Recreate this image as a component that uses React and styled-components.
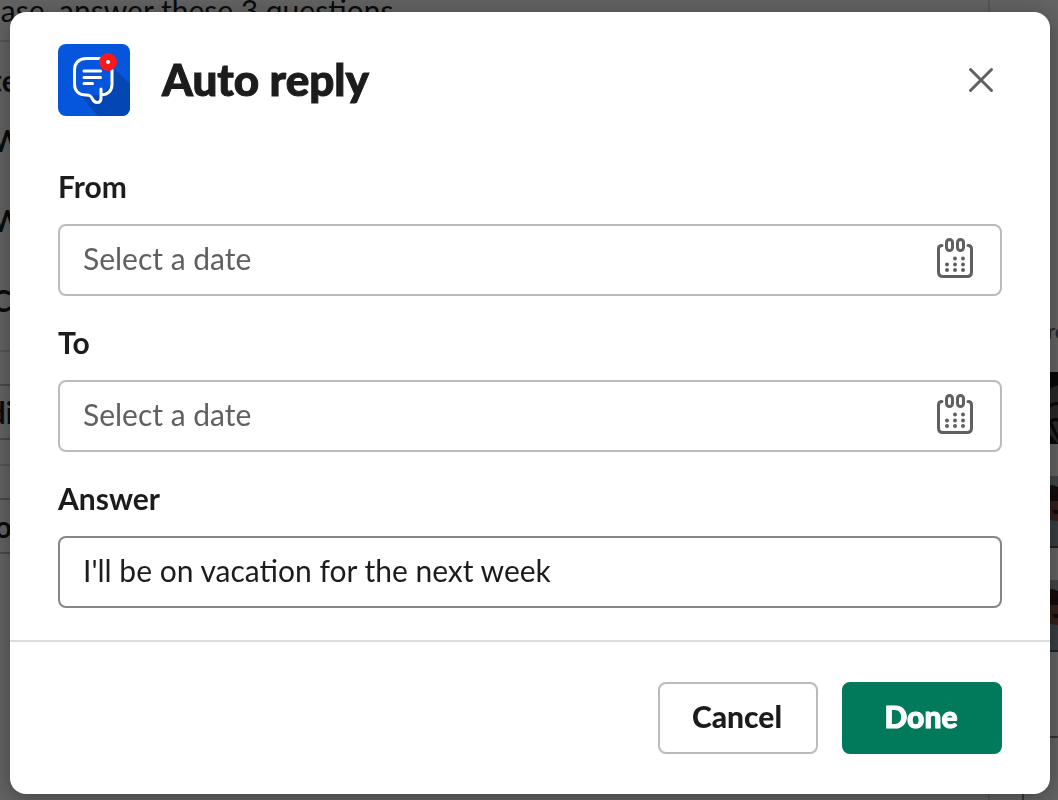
// External
import React, { useState } from 'react';
import styled, { createGlobalStyle } from 'styled-components';

const GlobalStyle = createGlobalStyle`
    * {
        box-sizing: border-box;
    }

    body {
        margin: 0;
        background-color: white;
        color: #1d1c1d;
        font-family: Lato, sans-serif;
        font-size: 30px;
        line-height: 36px;
    }

    input, button {
        font: inherit;
        color: inherit;
    }
`;

// Conversation behind the dialog
const Page = styled.div`
    display: flex;
    height: 100vh;
    overflow: hidden;
`;

const Thread = styled.main`
    flex: 1;
    margin-left: -40px;
    border-right: 2px solid #ddd;
`;

const Intro = styled.p`
    margin: 0;
    height: 42px;
    line-height: 20px;
    border-bottom: 2px solid #ddd;
`;

const ReportTitle = styled.h2`
    margin: 0;
    padding: 20px 0;
    font-size: 30px;
    line-height: 36px;
`;

const Questions = styled.ol`
    display: flex;
    flex-direction: column;
    gap: 44px;
    margin: 0;
    padding: 4px 0 32px;
    font-weight: 700;
    list-style: none;
`;

const Actions = styled.div`
    padding: 32px 0 24px;
    border-top: 2px solid #ddd;
`;

const ActionButton = styled.button`
    display: block;
    width: 160px;
    height: 56px;
    padding: 0 10px;
    border: 2px solid #bbb;
    border-radius: 8px;
    background-color: white;
    font-weight: 700;
    text-align: left;
`;

const Sidebar = styled.aside`
    width: 68px;
    padding: 310px 0 0 24px;
    overflow: hidden;
`;

const Note = styled.p`
    margin: 0 0 20px;
    color: #616061;
    font-size: 22px;
    line-height: 42px;
`;

const Photo = styled.svg`
    display: block;
    width: 72px;
    height: 72px;
    margin-bottom: 32px;
`;

const Composer = styled.div`
    height: 120px;
    margin: 84px 0 0 8px;
    border-top: 2px solid #888;
    border-left: 2px solid #888;
`;

// Dialog
const Overlay = styled.div`
    position: fixed;
    inset: 0;
    padding: 12px 8px 6px 10px;
    background-color: rgba(0, 0, 0, 0.61);
    overflow: auto;
`;

const Modal = styled.section`
    background-color: white;
    border-radius: 16px;
    box-shadow: 0 4px 24px rgba(0, 0, 0, 0.35);
`;

const Header = styled.header`
    display: flex;
    align-items: center;
    gap: 32px;
    padding: 32px 48px 0;
`;

const Title = styled.h1`
    flex: 1;
    margin: 0;
    padding-bottom: 2px;
    font-size: 44px;
    font-weight: 900;
    line-height: 56px;
    -webkit-text-stroke: 1px currentColor;
`;

const CloseButton = styled.button`
    display: flex;
    align-items: center;
    justify-content: center;
    width: 42px;
    height: 42px;
    padding: 0;
    border: 0;
    background: none;
    color: #616061;
`;

const Form = styled.div`
    display: flex;
    flex-direction: column;
    gap: 28px;
    padding: 52px 48px 32px;
`;

const Field = styled.div`
    display: flex;
    flex-direction: column;
    gap: 20px;
`;

const Label = styled.label`
    font-weight: 700;
`;

const InputBox = styled.div`
    display: flex;
    align-items: center;
    height: 72px;
    padding: 0 27px 4px 23px;
    border: 2px solid ${ ( { $filled } ) => $filled ? '#868686' : '#bbb' };
    border-radius: 8px;
`;

const Input = styled.input`
    flex: 1;
    min-width: 0;
    height: 40px;
    padding: 0;
    border: 0;
    outline: 0;
    background: none;

    &::placeholder {
        color: #616061;
        opacity: 1;
    }
`;

const CalendarButton = styled.button`
    display: flex;
    padding: 0;
    border: 0;
    background: none;
    color: #616061;
`;

const Footer = styled.footer`
    display: flex;
    justify-content: flex-end;
    gap: 24px;
    padding: 40px 48px;
    border-top: 2px solid #ddd;
`;

const Button = styled.button`
    width: 160px;
    height: 72px;
    padding: 0 2px 4px 0;
    border: 2px solid ${ ( { $primary } ) => $primary ? '#007a5a' : '#bbb' };
    border-radius: 8px;
    background-color: ${ ( { $primary } ) => $primary ? '#007a5a' : 'white' };
    color: ${ ( { $primary } ) => $primary ? 'white' : '#1d1c1d' };
    font-weight: 900;
    -webkit-text-stroke: ${ ( { $primary } ) => $primary ? '1px' : '0' } currentColor;
`;

const Logo = () =>
    <svg width="72" height="72" viewBox="0 0 72 72" fill="none" aria-hidden="true">
        <clipPath id="logo-shape">
            <rect width="72" height="72" rx="8" />
        </clipPath>
        <g clipPath="url(#logo-shape)">
            <rect width="72" height="72" fill="#0556dc" />
            <path d="M56 24L72 40V72H40L22 51H43L54 40Z" fill="#0446b4" />
        </g>
        <g stroke="white" strokeWidth="3" strokeLinecap="round" strokeLinejoin="round">
            <path d="M44 14.5H28C21 14.5 16.5 19 16.5 26V40C16.5 47 21 51 28 51C32 51 33 52 34.5 55C36 58 37.5 58.5 39 58.5C41.5 58.5 43 57 43 54V45M43 51C50 50.5 54 46.5 54 40V26" />
            <path d="M26 27H42.500M26 33.500H42.500M26 39.500H34.500" />
        </g>
        <circle cx="50" cy="18" r="9" fill="#f8191c" />
        <circle cx="50" cy="18" r="2" fill="white" />
    </svg>;

const CloseIcon = () =>
    <svg width="26" height="26" viewBox="0 0 26 26" stroke="currentColor" strokeWidth="3" strokeLinecap="round" aria-hidden="true">
        <path d="M2.500 2.500L23.500 23.500M23.500 2.500L2.500 23.500" />
    </svg>;

const CalendarIcon = () =>
    <svg width="36" height="40" viewBox="0 0 36 40" fill="none" stroke="currentColor" strokeWidth="3" strokeLinecap="round" aria-hidden="true">
        <path d="M5 7.500C2.500 7.500 1.500 9 1.500 11V34C1.500 37 3 38.500 6 38.500H30C33 38.500 34.500 37 34.500 34V11C34.500 9 33.500 7.500 31 7.500" />
        <rect x="9.500" y="1.500" width="6" height="11" rx="3" />
        <rect x="20.500" y="1.500" width="6" height="11" rx="3" />
        <g fill="currentColor" stroke="none">
            <circle cx="18" cy="20.500" r="2" />
            <circle cx="26" cy="20.500" r="2" />
            <circle cx="10" cy="26.500" r="2" />
            <circle cx="18" cy="26.500" r="2" />
            <circle cx="26" cy="26.500" r="2" />
            <circle cx="10" cy="32" r="2" />
            <circle cx="18" cy="32" r="2" />
            <circle cx="26" cy="32" r="2" />
        </g>
    </svg>;

const MonoPhoto = () =>
    <Photo viewBox="0 0 72 72" aria-hidden="true">
        <rect width="72" height="72" fill="#666" />
        <path d="M0 0H72V12Q50 8 34 18L0 22Z" fill="#151515" />
        <path d="M32 38Q38 30 46 32M34 46L46 70M36 50Q42 44 50 52" fill="none" stroke="#111" strokeWidth="3" />
        <path d="M34 60L44 72H30Z" fill="#111" />
    </Photo>;

const PortraitPhoto = () =>
    <Photo viewBox="0 0 72 72" aria-hidden="true">
        <rect width="72" height="72" fill="#a5b0b5" />
        <path d="M14 30Q16 8 36 9Q54 10 56 34L50 24H20Z" fill="#33211f" />
        <path d="M18 22H52V36Q48 48 38 45Q24 44 18 22Z" fill="#8a5048" />
        <path d="M34 18H50V25H36ZM38 34H48V38H40Z" fill="#30191c" />
        <path d="M0 72Q12 48 28 42L46 46L72 72Z" fill="#8ea1a9" />
        <path d="M0 70H72V72H0Z" fill="#555" />
    </Photo>;

const Background = () =>
    <Page aria-hidden="true" inert>
        <Thread>
            <Intro>Please, answer these 3 questions</Intro>
            <ReportTitle>Late</ReportTitle>
            <Questions>
                <li>1. W</li>
                <li>2. W</li>
                <li>3. C</li>
            </Questions>
            <Actions>
                <ActionButton>Edit</ActionButton>
            </Actions>
            <Actions>
                <ActionButton>No</ActionButton>
            </Actions>
        </Thread>
        <Sidebar>
            <Note>Were</Note>
            <MonoPhoto />
            <PortraitPhoto />
            <PortraitPhoto />
            <Composer />
        </Sidebar>
    </Page>;

const DateField = ( { id, label } ) =>
    <Field>
        <Label htmlFor={ id }>{ label }</Label>
        <InputBox>
            <Input id={ id } type="text" placeholder="Select a date" />
            <CalendarButton type="button" aria-label={ `Open calendar: ${ label }` }>
                <CalendarIcon />
            </CalendarButton>
        </InputBox>
    </Field>;

const App = () => {
    const [ answer, setAnswer ] = useState( "I'll be on vacation for the next week" );

    return (
        <>
            <GlobalStyle />
            <Background />
            <Overlay>
                <Modal role="dialog" aria-modal="true" aria-labelledby="dialog-title">
                    <Header>
                        <Logo />
                        <Title id="dialog-title">Auto reply</Title>
                        <CloseButton type="button" aria-label="Close">
                            <CloseIcon />
                        </CloseButton>
                    </Header>
                    <Form>
                        <DateField id="from" label="From" />
                        <DateField id="to" label="To" />
                        <Field>
                            <Label htmlFor="answer">Answer</Label>
                            <InputBox $filled>
                                <Input
                                    id="answer"
                                    type="text"
                                    value={ answer }
                                    onChange={ e => setAnswer( e.target.value ) }
                                />
                            </InputBox>
                        </Field>
                    </Form>
                    <Footer>
                        <Button type="button">Cancel</Button>
                        <Button type="button" $primary>Done</Button>
                    </Footer>
                </Modal>
            </Overlay>
        </>
    );
};

export default App;
